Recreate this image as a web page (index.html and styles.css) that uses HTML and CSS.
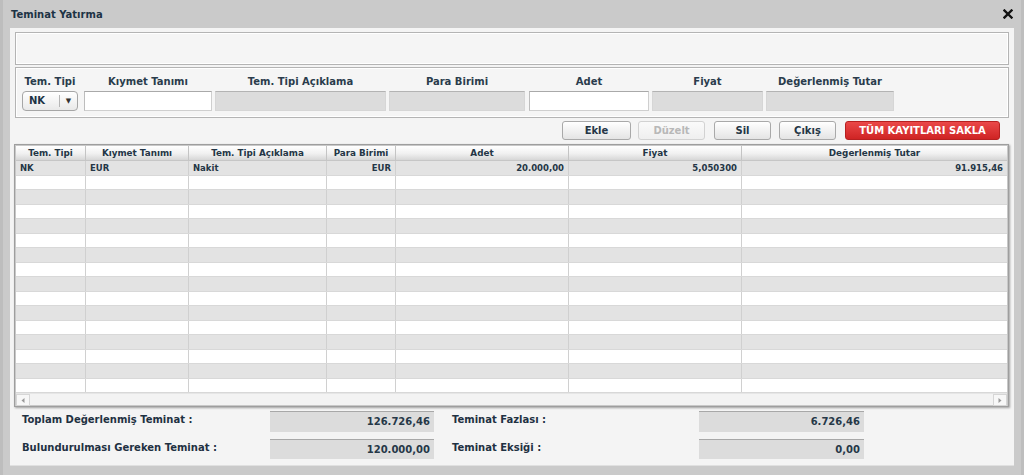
FILE: index.html
```html
<!DOCTYPE html>
<html lang="tr">
<head>
<meta charset="utf-8">
<title>Teminat Yatırma</title>
<link rel="stylesheet" href="styles.css">
</head>
<body>
<div class="dialog">
  <div class="titlebar">
    <span class="title">Teminat Yatırma</span>
    <svg class="close" width="10" height="10" viewBox="0 0 10 10"><path d="M1.5 1.5 L8.5 8.5 M8.5 1.5 L1.5 8.5" stroke="#111" stroke-width="2.4" stroke-linecap="square"/></svg>
  </div>
  <div class="panel">
    <div class="msgbox"></div>

    <div class="formbox">
      <div class="field w-tip gap-wide">
        <label class="flabel">Tem. Tipi</label>
        <div class="select"><span class="sel-val">NK</span><span class="sel-arrow">▼</span></div>
      </div>
      <div class="field w-kiymet">
        <label class="flabel">Kıymet Tanımı</label>
        <div class="input"></div>
      </div>
      <div class="field w-aciklama">
        <label class="flabel">Tem. Tipi Açıklama</label>
        <div class="input ro"></div>
      </div>
      <div class="field w-para gap-adet">
        <label class="flabel">Para Birimi</label>
        <div class="input ro"></div>
      </div>
      <div class="field w-adet">
        <label class="flabel">Adet</label>
        <div class="input"></div>
      </div>
      <div class="field w-fiyat">
        <label class="flabel">Fiyat</label>
        <div class="input ro"></div>
      </div>
      <div class="field w-tutar">
        <label class="flabel">Değerlenmiş Tutar</label>
        <div class="input ro"></div>
      </div>
    </div>

    <div class="actions">
      <button class="btn b-ekle">Ekle</button>
      <button class="btn b-duzelt" disabled>Düzelt</button>
      <button class="btn b-sil">Sil</button>
      <button class="btn b-cikis">Çıkış</button>
      <button class="btn b-save">TÜM KAYITLARI SAKLA</button>
    </div>

    <div class="grid">
      <div class="grow ghead">
        <div class="gc">Tem. Tipi</div>
        <div class="gc">Kıymet Tanımı</div>
        <div class="gc">Tem. Tipi Açıklama</div>
        <div class="gc">Para Birimi</div>
        <div class="gc">Adet</div>
        <div class="gc">Fiyat</div>
        <div class="gc">Değerlenmiş Tutar</div>
      </div>
      <div class="gbody">
        <div class="grow odd">
          <div class="gc">NK</div>
          <div class="gc">EUR</div>
          <div class="gc">Nakit</div>
          <div class="gc num">EUR</div>
          <div class="gc num">20.000,00</div>
          <div class="gc num">5,050300</div>
          <div class="gc num">91.915,46</div>
        </div>
        <div class="grow"><div class="gc"></div><div class="gc"></div><div class="gc"></div><div class="gc"></div><div class="gc"></div><div class="gc"></div><div class="gc"></div></div>
        <div class="grow odd"><div class="gc"></div><div class="gc"></div><div class="gc"></div><div class="gc"></div><div class="gc"></div><div class="gc"></div><div class="gc"></div></div>
        <div class="grow"><div class="gc"></div><div class="gc"></div><div class="gc"></div><div class="gc"></div><div class="gc"></div><div class="gc"></div><div class="gc"></div></div>
        <div class="grow odd"><div class="gc"></div><div class="gc"></div><div class="gc"></div><div class="gc"></div><div class="gc"></div><div class="gc"></div><div class="gc"></div></div>
        <div class="grow"><div class="gc"></div><div class="gc"></div><div class="gc"></div><div class="gc"></div><div class="gc"></div><div class="gc"></div><div class="gc"></div></div>
        <div class="grow odd"><div class="gc"></div><div class="gc"></div><div class="gc"></div><div class="gc"></div><div class="gc"></div><div class="gc"></div><div class="gc"></div></div>
        <div class="grow"><div class="gc"></div><div class="gc"></div><div class="gc"></div><div class="gc"></div><div class="gc"></div><div class="gc"></div><div class="gc"></div></div>
        <div class="grow odd"><div class="gc"></div><div class="gc"></div><div class="gc"></div><div class="gc"></div><div class="gc"></div><div class="gc"></div><div class="gc"></div></div>
        <div class="grow"><div class="gc"></div><div class="gc"></div><div class="gc"></div><div class="gc"></div><div class="gc"></div><div class="gc"></div><div class="gc"></div></div>
        <div class="grow odd"><div class="gc"></div><div class="gc"></div><div class="gc"></div><div class="gc"></div><div class="gc"></div><div class="gc"></div><div class="gc"></div></div>
        <div class="grow"><div class="gc"></div><div class="gc"></div><div class="gc"></div><div class="gc"></div><div class="gc"></div><div class="gc"></div><div class="gc"></div></div>
        <div class="grow odd"><div class="gc"></div><div class="gc"></div><div class="gc"></div><div class="gc"></div><div class="gc"></div><div class="gc"></div><div class="gc"></div></div>
        <div class="grow"><div class="gc"></div><div class="gc"></div><div class="gc"></div><div class="gc"></div><div class="gc"></div><div class="gc"></div><div class="gc"></div></div>
        <div class="grow odd"><div class="gc"></div><div class="gc"></div><div class="gc"></div><div class="gc"></div><div class="gc"></div><div class="gc"></div><div class="gc"></div></div>
        <div class="grow"><div class="gc"></div><div class="gc"></div><div class="gc"></div><div class="gc"></div><div class="gc"></div><div class="gc"></div><div class="gc"></div></div>
      </div>
      <div class="hscroll">
        <span class="sbtn"><svg width="4" height="5" viewBox="0 0 4 5"><path d="M3.5 0 L0.5 2.5 L3.5 5 Z" fill="#999"/></svg></span>
        <span class="strack"></span>
        <span class="sbtn"><svg width="4" height="5" viewBox="0 0 4 5"><path d="M0.5 0 L3.5 2.5 L0.5 5 Z" fill="#999"/></svg></span>
      </div>
    </div>

    <div class="summary">
      <span class="slabel">Toplam Değerlenmiş Teminat :</span>
      <span class="sval">126.726,46</span>
      <span class="slabel r">Teminat Fazlası :</span>
      <span class="sval">6.726,46</span>
      <span class="slabel">Bulundurulması Gereken Teminat :</span>
      <span class="sval">120.000,00</span>
      <span class="slabel r">Teminat Eksiği :</span>
      <span class="sval">0,00</span>
    </div>
  </div>
</div>
</body>
</html>
```
FILE: styles.css
```css
* { box-sizing: border-box; }
html, body { margin: 0; padding: 0; }
body {
  width: 1024px;
  height: 475px;
  overflow: hidden;
  background: #c9c9c9;
  font-family: "DejaVu Sans", Verdana, sans-serif;
  color: #263848;
}
.dialog {
  height: 475px;
  border-left: 3px solid #bdbdbd;
  border-right: 3px solid #bebebe;
  background: #cacaca;
  padding: 0 7px 0 7px;
}
.titlebar {
  height: 28px;
  display: flex;
  align-items: center;
  justify-content: space-between;
  padding: 0 1px 0 1px;
}
.title {
  font-weight: bold;
  font-size: 10px;
  color: #1d3345;
}
.close { display: block; }

.panel {
  background: #f4f4f4;
  padding: 4px 5px 6px 5px;
  border-bottom: 1px solid #e0e0e0;
}
.msgbox {
  height: 33px;
  border: 1px solid #b4b4b4;
  box-shadow: inset 0 0 0 1px #fff;
  background: #f5f5f5;
}
.formbox {
  margin-top: 2px;
  height: 51px;
  border: 1px solid #b4b4b4;
  box-shadow: inset 0 0 0 1px #fff;
  background: #f5f5f5;
  display: flex;
  align-items: flex-start;
  gap: 3px;
  padding: 7px 0 0 6px;
}
.field {
  display: flex;
  flex-direction: column;
  align-items: center;
}
.flabel {
  font-size: 10px;
  font-weight: bold;
  line-height: 13px;
  color: #2a3c4c;
  white-space: nowrap;
  margin-bottom: 3px;
}
.w-tip { width: 56px; }
.gap-wide { margin-right: 3px; }
.w-kiymet { width: 128px; }
.w-aciklama { width: 171px; }
.w-para { width: 136px; }
.gap-adet { margin-right: 1px; }
.w-adet { width: 120px; }
.w-fiyat { width: 111px; }
.w-tutar { width: 128px; }

.input {
  width: 100%;
  height: 20px;
  background: #fff;
  border: 1px solid #cfcfcf;
  border-top-color: #a9a9a9;
  border-left-color: #bdbdbd;
}
.input.ro {
  background: #dcdcdc;
  border-color: #d6d6d6;
  border-top-color: #b3b3b3;
}
.select {
  width: 100%;
  height: 20px;
  border: 1px solid #a6a6a6;
  border-radius: 4px;
  background: linear-gradient(#ffffff, #e9e9e9);
  display: flex;
  align-items: center;
  font-size: 10px;
  font-weight: bold;
  color: #1d3345;
}
.sel-val {
  width: 37px;
  padding-left: 6px;
  border-right: 1px solid #b5b5b5;
  line-height: 12px;
}
.sel-arrow {
  flex: 1;
  text-align: center;
  font-size: 7px;
  color: #333;
}

.actions {
  margin-top: 3px;
  height: 19px;
  display: flex;
  justify-content: flex-end;
  gap: 8px;
  padding-right: 9px;
}
.btn {
  height: 19px;
  padding: 0;
  border: 1px solid #a9a9a9;
  border-radius: 3px;
  background: linear-gradient(#ffffff, #e4e4e4);
  font-family: "DejaVu Sans", Verdana, sans-serif;
  font-size: 10px;
  font-weight: bold;
  color: #243646;
}
.b-ekle { width: 69px; }
.b-duzelt { width: 67px; color: #b8b8b8; border-color: #d2d2d2; background: linear-gradient(#fafafa, #efefef); margin-left: -1px; }
.b-sil { width: 57px; margin-left: 1px; }
.b-cikis { width: 57px; }
.b-save {
  width: 155px;
  margin-left: 1px;
  border-color: #b62020;
  background: linear-gradient(#ea4848, #cf2424);
  color: #fff;
}

.grid {
  margin: 4px 0 0 -1px;
  width: 995px;
  border: 1px solid #9e9e9e;
  box-shadow: 1px 1px 2px rgba(0,0,0,0.35), inset 0 0 0 1px #c8c8c8;
  padding: 1px;
  background: #fff;
}
.grow {
  display: grid;
  grid-template-columns: 70px 103px 138px 69px 173px 173px 265px;
  height: 14.5px;
  background: #fff;
  border-bottom: 1px solid #d8d8d8;
}
.grow.odd { background: #e3e3e3; }
.ghead {
  height: 15px;
  background: linear-gradient(#ffffff, #f0f0f0 55%, #d6d6d6);
  border-bottom: 1px solid #c6c6c6;
}
.gc {
  border-right: 1px solid #d0d0d0;
  font-size: 8.5px;
  font-weight: bold;
  line-height: 14px;
  padding: 0 4px;
  white-space: nowrap;
  overflow: hidden;
  color: #243646;
}
.ghead .gc { text-align: center; border-right-color: #c4c4c4; font-size: 8.8px; }
.gc:last-child { border-right: none; }
.gc.num { text-align: right; }

.hscroll {
  height: 12px;
  display: flex;
  background: #f3f3f3;
  border-top: 1px solid #e6e6e6;
}
.sbtn {
  width: 14px;
  height: 12px;
  border: 1px solid #d6d6d6;
  background: #f7f7f7;
  display: flex;
  align-items: center;
  justify-content: center;
}
.strack { flex: 1; }

.summary {
  margin-top: 4px;
  display: grid;
  grid-template-columns: 248px 164px 265px 165px;
  grid-template-rows: 21px 20px;
  row-gap: 7px;
  padding-left: 7px;
  align-items: center;
}
.slabel {
  font-size: 10px;
  font-weight: bold;
  color: #1f3142;
  white-space: nowrap;
  align-self: start;
  line-height: 17px;
}
.slabel.r { padding-left: 18px; }
.sval {
  height: 100%;
  background: #dcdcdc;
  border-top: 1px solid #a8a8a8;
  font-size: 10px;
  font-weight: bold;
  text-align: right;
  padding-right: 4px;
  line-height: 20px;
  color: #263848;
}
```
